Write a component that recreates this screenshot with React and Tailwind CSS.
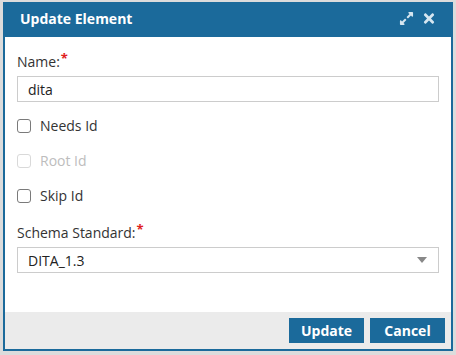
import React from "react";
import { FaExpandAlt, FaTimes } from "react-icons/fa";

const font = { fontFamily: '"Open Sans", "Liberation Sans", sans-serif' };

function Required() {
  return <span className="text-[#e02020] text-[13px] font-bold align-top relative -top-[4px] ml-[1px]">*</span>;
}

function CheckRow({ label, disabled }) {
  return (
    <label className={`flex items-center h-5 ${disabled ? "text-[#bdbdbd]" : "text-[#333]"}`}>
      <span
        className={`w-[14px] h-[14px] rounded-[3px] border bg-white ${disabled ? "border-[#d9d9d9]" : "border-[#7a7a7a]"}`}
      />
      <span className="ml-[9px] text-[14px] leading-5">{label}</span>
    </label>
  );
}

export default function App() {
  return (
    <div className="w-[456px] h-[355px] bg-[#dcdcdc] pt-[2px] pl-[3px]" style={font}>
      <div className="w-[450px] h-[349px] border-2 border-[#1b6a9b] flex flex-col">
        {/* Title */}
        <div className="h-[33px] bg-[#1b6a9b] flex items-start pl-[15px] pr-[16px] pt-[5px]">
          <span className="text-white font-bold text-[14px] leading-5 flex-1">Update Element</span>
          <div className="flex items-center gap-[9px] text-[#d6e6f0] pt-[2px]">
            <FaExpandAlt className="w-[15px] h-[15px]" />
            <FaTimes className="w-[12px] h-[15px]" />
          </div>
        </div>

        {/* Body */}
        <div className="flex-1 bg-white px-3 pt-[15px]">
          <div className="text-[14px] leading-5 text-[#333]">
            Name:<Required />
          </div>
          <div className="mt-1 h-[26px] border border-[#cccccc] flex items-center px-[10px] text-[14px] text-[#222]">
            dita
          </div>

          <div className="mt-[14px] flex flex-col gap-[15px]">
            <CheckRow label="Needs Id" />
            <CheckRow label="Root Id" disabled />
            <CheckRow label="Skip Id" />
          </div>

          <div className="mt-[17px] text-[14px] leading-5 text-[#333]">
            Schema Standard:<Required />
          </div>
          <div className="mt-1 h-[26px] border border-[#cccccc] flex items-center justify-between pl-[10px] pr-[11px] text-[14px] text-[#222]">
            <span>DITA_1.3</span>
            <svg width="10" height="6" viewBox="0 0 10 6">
              <path d="M0 0 H10 L5 6 Z" fill="#888" />
            </svg>
          </div>
        </div>

        {/* Footer */}
        <div className="h-[37px] bg-[#ebebeb] flex justify-end items-start gap-[6px] pt-[6px] pr-[6px]">
          <button className="w-[75px] h-[25px] bg-[#1b6a9b] text-white font-bold text-[14px] leading-none">
            Update
          </button>
          <button className="w-[75px] h-[25px] bg-[#1b6a9b] text-white font-bold text-[14px] leading-none">
            Cancel
          </button>
        </div>
      </div>
    </div>
  );
}
